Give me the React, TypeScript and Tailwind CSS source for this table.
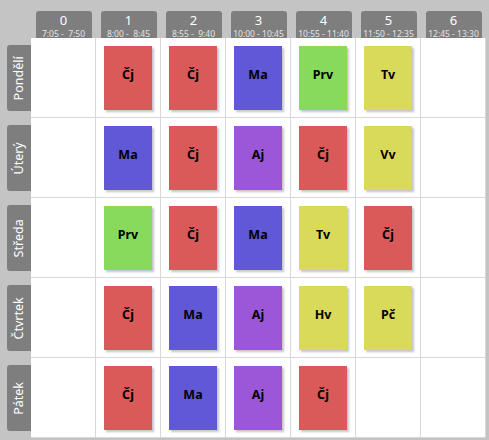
const periods = [
  { n: "0", t: "7:05 -  7:50" },
  { n: "1", t: "8:00 -  8:45" },
  { n: "2", t: "8:55 -  9:40" },
  { n: "3", t: "10:00 - 10:45" },
  { n: "4", t: "10:55 - 11:40" },
  { n: "5", t: "11:50 - 12:35" },
  { n: "6", t: "12:45 - 13:30" },
];

const colors: Record<string, string> = {
  "Čj": "bg-[#da5a5a]",
  Ma: "bg-[#6158d8]",
  Aj: "bg-[#9b57d8]",
  Prv: "bg-[#88da5a]",
  Tv: "bg-[#d9d95a]",
  Vv: "bg-[#d9d95a]",
  Hv: "bg-[#d9d95a]",
  "Pč": "bg-[#d9d95a]",
};

const days: { name: string; lessons: (string | null)[] }[] = [
  { name: "Pondělí", lessons: [null, "Čj", "Čj", "Ma", "Prv", "Tv", null] },
  { name: "Úterý", lessons: [null, "Ma", "Čj", "Aj", "Čj", "Vv", null] },
  { name: "Středa", lessons: [null, "Prv", "Čj", "Ma", "Tv", "Čj", null] },
  { name: "Čtvrtek", lessons: [null, "Čj", "Ma", "Aj", "Hv", "Pč", null] },
  { name: "Pátek", lessons: [null, "Čj", "Ma", "Aj", "Čj", null, null] },
];

export default function App() {
  return (
    <div
      className="w-[489px] h-[440px] bg-[#c4c4c4] overflow-hidden"
      style={{ fontFamily: '"Noto Sans", "Open Sans", sans-serif' }}
    >
      {/* period headers */}
      <div className="flex pl-[31px] pt-[11px] h-[38px]">
        {periods.map((p) => (
          <div key={p.n} className="w-[65px] flex justify-center">
            <div className="w-[56px] h-[27px] bg-[#7e7e7e] rounded-t-[3px] flex flex-col items-center text-white">
              <span className="text-[13px] leading-[14px] mt-[2px]">{p.n}</span>
              <span className="text-[8.5px] leading-[9px] mt-[2px] text-[#e4e4e4] whitespace-pre">{p.t}</span>
            </div>
          </div>
        ))}
      </div>

      {days.map((d) => (
        <div key={d.name} className="flex h-[80px]">
          <div className="w-[31px] pl-[7px] pt-[7px]">
            <div className="w-[24px] h-[66px] bg-[#7e7e7e] rounded-l-[3px] flex items-center justify-center">
              <span className="-rotate-90 text-white text-[12.5px] whitespace-nowrap">{d.name}</span>
            </div>
          </div>
          {d.lessons.map((l, i) => (
            <div
              key={i}
              className="w-[65px] h-[80px] bg-white border-r border-b border-[#d8d8d8] flex items-center justify-center"
            >
              {l && (
                <div
                  className={`w-[48px] h-[64px] ${colors[l]} shadow-[2px_2px_2px_rgba(60,60,90,0.3)] flex items-center justify-center pb-[4px]`}
                >
                  <span className="text-[12.5px] font-bold text-black">{l}</span>
                </div>
              )}
            </div>
          ))}
        </div>
      ))}
    </div>
  );
}
